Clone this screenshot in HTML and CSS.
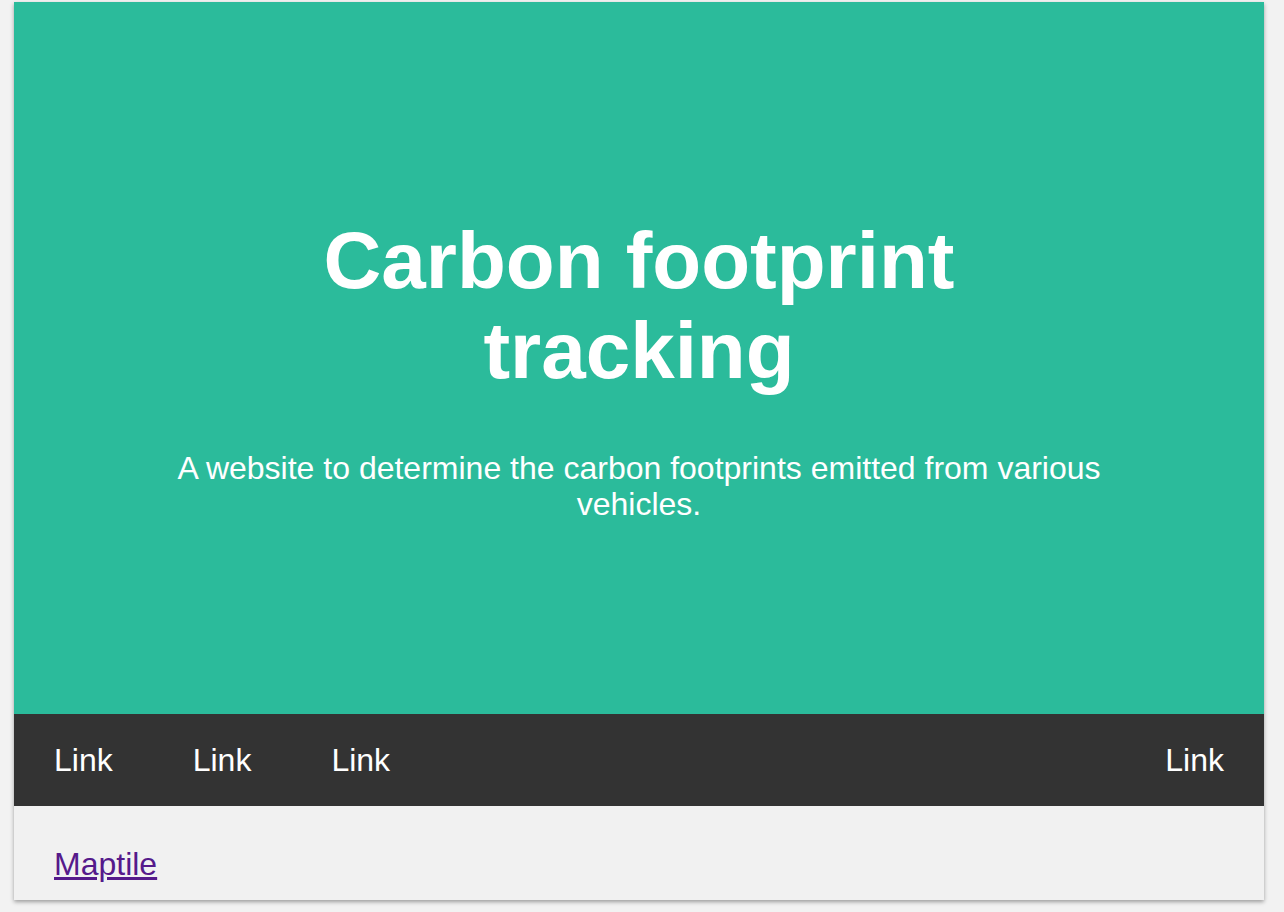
FILE: index.html
```html
<!DOCTYPE html>
<html lang="en">
<head>
<meta charset="utf-8">
<title>Carbon footprint tracking</title>
<link rel="stylesheet" href="styles.css">
</head>
<body>
<div class="page">
  <header class="hero">
    <h1 class="hero-title">Carbon footprint tracking</h1>
    <p class="hero-sub">A website to determine the carbon footprints emitted from various vehicles.</p>
  </header>
  <nav class="navbar">
    <a class="nav-link" href="#">Link</a>
    <a class="nav-link" href="#">Link</a>
    <a class="nav-link" href="#">Link</a>
    <a class="nav-link nav-right" href="#">Link</a>
  </nav>
  <main class="content">
    <a class="maplink" href="#">Maptile</a>
  </main>
</div>
</body>
</html>
```

FILE: styles.css
```css
html, body {
  margin: 0;
  padding: 0;
}
body {
  background: #f2f2f2;
  font-family: "Liberation Sans", Arial, sans-serif;
}
.page {
  margin: 2px 20px 12px 14px;
  box-shadow: 0 2px 4px rgba(0, 0, 0, 0.35);
  background: #f1f1f1;
}
.hero {
  background: #2bbb9b;
  color: #ffffff;
  text-align: center;
  padding: 160px 150px;
}
.hero-title {
  font-size: 80px;
  line-height: 90px;
  font-weight: bold;
  margin: 54px 0;
}
.hero-sub {
  font-size: 32px;
  line-height: 36px;
  margin: 0 0 32px;
}
.navbar {
  background: #333333;
  display: flex;
}
.nav-link {
  color: #ffffff;
  text-decoration: none;
  font-size: 32px;
  line-height: 36px;
  padding: 28px 40px;
}
.nav-right {
  margin-left: auto;
}
.content {
  padding: 40px 40px 18px;
  font-size: 32px;
  line-height: 36px;
}
.maplink {
  color: #551a8b;
}
```
